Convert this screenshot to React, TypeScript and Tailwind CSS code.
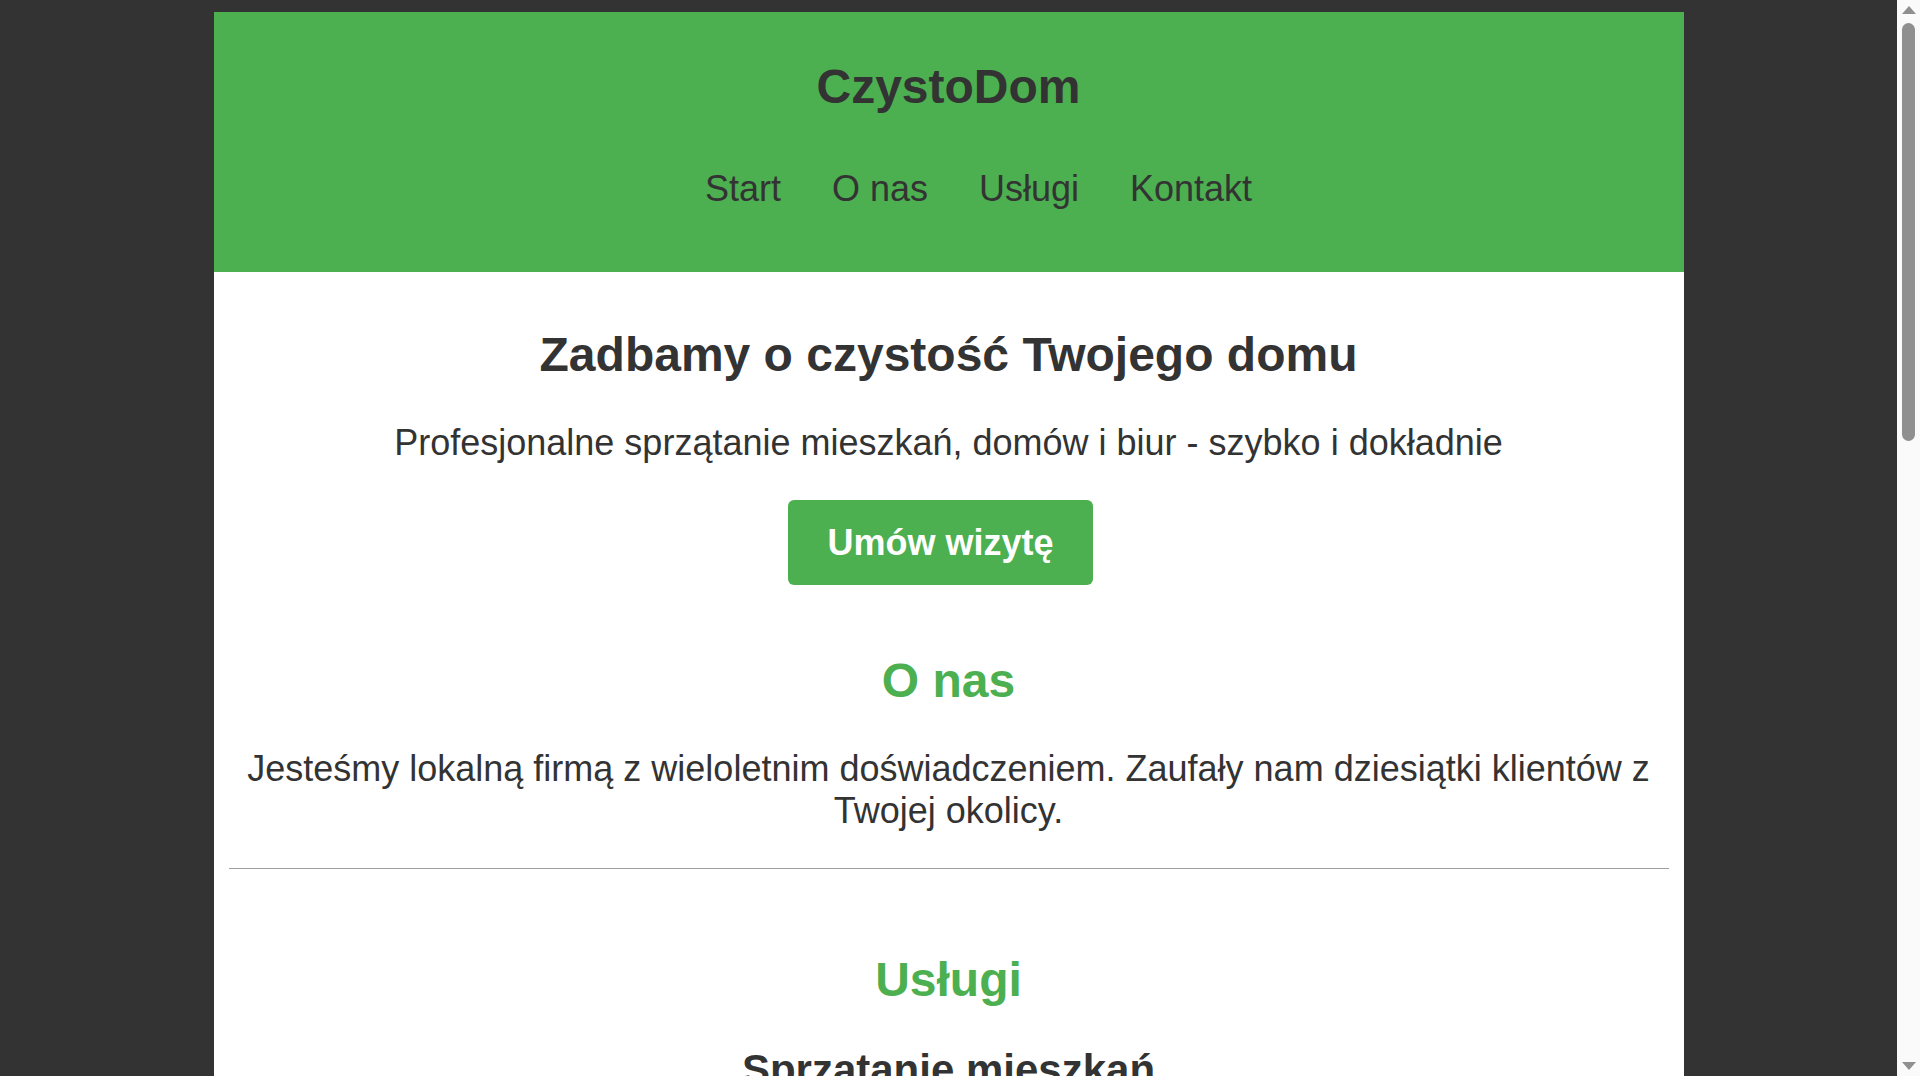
const services = [
  { name: "Sprzątanie mieszkań", desc: "Kompleksowe sprzątanie kuchni, łazienek, pokoi i przedpokoi." },
  { name: "Sprzątanie domów", desc: "Regularne i jednorazowe sprzątanie domów jednorodzinnych." },
  { name: "Sprzątanie biur", desc: "Utrzymanie czystości w biurach i lokalach usługowych." },
];

function ScrollBar() {
  return (
    <div className="sticky top-0 flex h-screen w-[23px] shrink-0 flex-col items-center bg-[#fafafa] py-[6px]">
      <div className="h-0 w-0 border-x-[7px] border-b-[8px] border-x-transparent border-b-[#8f8f8f]" />
      <div className="mt-[9px] h-[418px] w-[13px] rounded-full bg-[#8f8f8f]" />
      <div className="flex-1" />
      <div className="h-0 w-0 border-x-[7px] border-t-[8px] border-x-transparent border-t-[#8f8f8f]" />
    </div>
  );
}

export default function App() {
  return (
    <div className="flex min-h-screen bg-[#333333] font-['Liberation_Sans',Arial,sans-serif] text-[#333333]">
      <main className="flex-1 py-[12px]">
        <div className="mx-auto w-[1470px] bg-white">
          <header className="flex h-[260px] flex-col items-center bg-[#4caf50] pt-[47px]">
            <h1 className="text-[48px] font-bold leading-[1.15]">CzystoDom</h1>
            <nav className="mt-[54px] flex gap-[51px] pl-[60px] text-[36px] leading-[1.15]">
              <a href="#start">Start</a>
              <a href="#o-nas">O nas</a>
              <a href="#uslugi">Usługi</a>
              <a href="#kontakt">Kontakt</a>
            </nav>
          </header>

          <section id="start" className="flex flex-col items-center px-5 pt-[55px] text-center">
            <h2 className="text-[48px] font-bold leading-[1.15]">Zadbamy o czystość Twojego domu</h2>
            <p className="mt-[40px] text-[36px] leading-[1.15]">
              Profesjonalne sprzątanie mieszkań, domów i biur - szybko i dokładnie
            </p>
            <a
              href="#kontakt"
              className="mt-[36px] mr-[16px] rounded-[6px] bg-[#4caf50] px-[39px] py-[22px] text-[36px] font-bold leading-[1.15] text-white"
            >
              Umów wizytę
            </a>
          </section>

          <section id="o-nas" className="px-5 pt-[68px] text-center">
            <h2 className="text-[48px] font-bold leading-[1.15] text-[#4caf50]">O nas</h2>
            <p className="mt-[40px] text-[36px] leading-[1.15]">
              Jesteśmy lokalną firmą z wieloletnim doświadczeniem. Zaufały nam dziesiątki klientów z Twojej okolicy.
            </p>
          </section>

          <hr className="mx-[15px] mt-[37px] border-t border-[#9e9e9e]" />

          <section id="uslugi" className="px-5 pt-[83px] text-center">
            <h2 className="text-[48px] font-bold leading-[1.15] text-[#4caf50]">Usługi</h2>
            <div className="mt-[39px] flex flex-col gap-[30px]">
              {services.map((s) => (
                <div key={s.name}>
                  <h3 className="text-[42px] font-bold leading-[1.15]">{s.name}</h3>
                  <p className="mt-[20px] text-[36px] leading-[1.15]">{s.desc}</p>
                </div>
              ))}
            </div>
          </section>

          <hr className="mx-[15px] mt-[37px] border-t border-[#9e9e9e]" />

          <section id="kontakt" className="px-5 pt-[60px] pb-[60px] text-center">
            <h2 className="text-[48px] font-bold leading-[1.15] text-[#4caf50]">Kontakt</h2>
            <p className="mt-[40px] text-[36px] leading-[1.15]">Telefon: 500 600 700</p>
            <p className="mt-[12px] text-[36px] leading-[1.15]">E-mail: kontakt@czystodom.pl</p>
          </section>
        </div>
      </main>
      <ScrollBar />
    </div>
  );
}
